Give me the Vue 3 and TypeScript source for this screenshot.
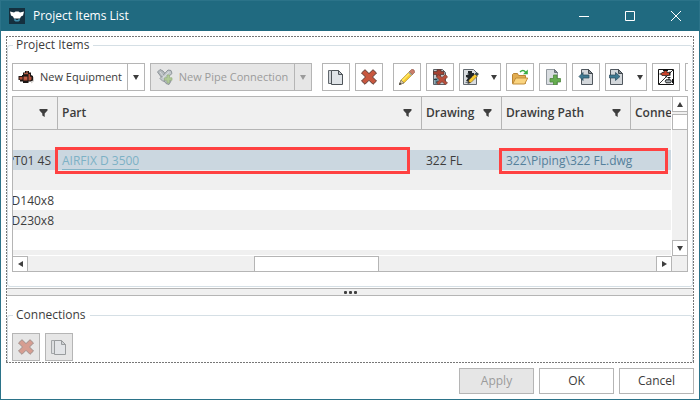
<script setup lang="ts">
interface Tool {
  icon: string
  label: string
  menu?: boolean
  spaced?: boolean
}

interface Row {
  tag: string
  part?: string
  drawing?: string
  path?: string
  selected?: boolean
}

const tools: Tool[] = [
  { icon: 'copy', label: 'Copy', spaced: true },
  { icon: 'delete', label: 'Delete' },
  { icon: 'pencil', label: 'Edit', spaced: true },
  { icon: 'remove-part', label: 'Remove part' },
  { icon: 'edit-part', label: 'Edit part', menu: true },
  { icon: 'folder', label: 'Open drawing' },
  { icon: 'add-page', label: 'Add drawing' },
  { icon: 'import', label: 'Import' },
  { icon: 'export', label: 'Export', menu: true },
  { icon: 'swap', label: 'Exchange' },
  { icon: '', label: 'More' },
]

const rows: Row[] = [
  { tag: '' },
  { tag: 'PT01 4S', part: 'AIRFIX D 3500', drawing: '322 FL', path: '322\\Piping\\322 FL.dwg', selected: true },
  { tag: '' },
  { tag: 'D140x8' },
  { tag: 'D230x8' },
  { tag: '' },
  { tag: '' },
]

const columns = ['', 'Part', 'Drawing', 'Drawing Path']
</script>

<template>
  <svg class="sprite" aria-hidden="true">
    <symbol id="copy" viewBox="0 0 16 16">
      <path d="M.500 1.500h3v13h-3z" fill="#d3d7db" stroke="#62686e" />
      <path d="M3.500 1.500h7l4 4v10h-11z" fill="#e0e4e8" stroke="#4e5459" />
      <path d="M10.500 1.500v4h4z" fill="#b9c0c6" stroke="#4e5459" />
    </symbol>
    <symbol id="delete" viewBox="0 0 16 16">
      <path d="M4 .700 8 4.600 12 .700 15.500 4 11.500 8l4 4L12 15.300l-4-4-4 4L.500 12l4-4-4-4z" fill="#c8573f" stroke="#5b3a33" stroke-linejoin="round" />
    </symbol>
    <symbol id="pencil" viewBox="0 0 16 16">
      <path d="M.500 15.500 2 11 11 2l3 3-9 9z" fill="#f6ca2d" stroke="#a98935" stroke-width=".6" />
      <path d="M3 12 12 3" stroke="#ffe96a" stroke-width="1.500" />
      <path d="m10.500 2.500 2-2q1.500-.5 2.500.6t.5 2.400l-2 2z" fill="#cb7c69" stroke="#8a5347" stroke-width=".6" />
      <path d="m9.800 3.200 3 3" stroke="#9aa3a9" stroke-width="1.500" />
      <path d="M.500 15.500 2 11l3 3z" fill="#d3c5a9" stroke="#716c64" stroke-width=".6" />
      <path d="m0 16 .8-2.500L2.600 15z" fill="#333" />
    </symbol>
    <symbol id="remove-part" viewBox="0 0 16 16">
      <path d="M1.500.500h9l3 3v12h-12z" fill="#c3c8cc" stroke="#596066" />
      <path d="M1.500 2.500H5V.800h4v1.700h3v3H8.500v2H4.500v-2h-3z" fill="#a34132" stroke="#4c302d" stroke-width=".7" />
      <path d="M2.500 9h4v6h-4z" fill="#6d8f9b" />
      <path d="M2 10.500h3M4 13h3" stroke="#273a42" />
      <path d="m6.500 5.500 3.500 3 3.500-3L15.500 8l-3 3 3 3-2 1.700-3.500-3-3.500 3L4.500 14l3-3-3-3z" fill="#b94e3b" stroke="#6b3a31" stroke-width=".7" />
    </symbol>
    <symbol id="edit-part" viewBox="0 0 16 16">
      <path d="M.500.500h10l3 3v12H.500z" fill="#dadde0" stroke="#62696f" />
      <path d="M5 2h4v2h2v3H9v3l-3 3-3-1 2-3-2-1V6h2z" fill="#22272a" />
      <path d="M2.500 13.500H5M4 5h2" stroke="#6f7b82" />
      <path d="m5.500 13.500.5-2.500 6-6 2.500 2-6.500 6.500z" fill="#f8c92f" stroke="#6e5b2a" stroke-width=".6" />
      <path d="m11.500 5 2-2L16 5l-2 2z" fill="#394a50" />
      <path d="m4.500 15 1-3 2 2z" fill="#403b32" />
    </symbol>
    <symbol id="folder" viewBox="0 0 16 16">
      <path d="M.500 14.500v-9l1-1h4l1 2h7v8z" fill="#e2ad51" stroke="#b98536" />
      <path d="m.700 15 3-6h12l-3 6z" fill="#fad47f" stroke="#c18e3e" />
      <path d="M8 3q3-3 5.500 0" fill="none" stroke="#37ad43" stroke-width="1.500" />
      <path d="M15.800.500v4.800H11z" fill="#37ad43" />
    </symbol>
    <symbol id="add-page" viewBox="0 0 16 16">
      <path d="M1.500.500h8l3 3v12h-11z" fill="#d9dde1" stroke="#92999f" />
      <path d="M9.500.500v3h3z" fill="#8a9196" stroke="#697278" />
      <path d="M8.500 6H12v3.500h3.500V13H12v3H8.500v-3H5V9.500h3.500z" fill="#66ad50" stroke="#4f873f" stroke-width=".8" />
    </symbol>
    <symbol id="import" viewBox="0 0 16 16">
      <path d="M3.500.500h7l4 4v11h-11z" fill="#d3d7db" stroke="#50575e" />
      <path d="M10.500.500v4h4z" fill="#81898f" stroke="#41484e" />
      <path d="M1 7.500 5 3.500V6h6v3H5v2.500z" fill="#3d7891" stroke="#29475a" stroke-width=".7" />
    </symbol>
    <symbol id="export" viewBox="0 0 16 16">
      <path d="M1.500.500h8l4 4v11h-12z" fill="#d3d7db" stroke="#50575e" />
      <path d="M9.500.500v4h4z" fill="#81898f" stroke="#41484e" />
      <path d="M11 7.500 6.500 3.500V6H.500v3h6v2.500z" fill="#3d7891" stroke="#29475a" stroke-width=".7" />
    </symbol>
    <symbol id="swap" viewBox="0 0 16 16">
      <path d="M.500.500h15v15H.500z" fill="#fff" stroke="#111" />
      <path d="M1 15 15 1" stroke="#333" />
      <path d="M4 3.500h2v-2h3v2h2.500v3H4q-2-1.500 0-3z" fill="#c8432b" stroke="#191919" stroke-width=".7" />
      <path d="M5 1.500h5M12 2.500v4M8 7v1.500M3 5H1.500" stroke="#111" />
      <path d="M11 8v3M9.500 8.500h3" stroke="#111" />
      <path d="M8 10.800h4.500q1.500 1.500 0 3H8q-1.500-1.500 0-3z" fill="#a9b1b6" stroke="#111" stroke-width=".9" />
      <path d="M14.500 10v4" stroke="#111" />
    </symbol>
    <symbol id="equipment" viewBox="0 0 16 16">
      <path d="M4 6h1V3.500h2V2h4v1.500h2V6l2 1v4.500l-2 1h-2.500V14H5v-1.500H2V11H.500V7H4z" fill="#1d1715" />
      <path d="M1.500 8h3v2.500h-3zM5.500 7.500h4v4h-4zM10.500 5h1.500v2.500l1.500.5v2.500l-1.500 1h-1.500zM6 12.500h3.500" fill="#b4503b" />
      <path d="M6 4.700h4M8 3h2M6 9h3" stroke="#cf6f53" />
      <path d="M15.700 8v4L13 14" fill="none" stroke="#c9c5c0" />
    </symbol>
    <symbol id="pipe" viewBox="0 0 16 16">
      <path d="M.500 3 3 .500 6 2l8 10-2 3.500-3-1z" fill="#b4babe" stroke="#8d9499" />
      <path d="m11 1 3 .5 1 3-9 8-3-3z" fill="#c2c8cb" stroke="#8d9499" />
      <path d="m3 3 8 10M12 3 6 9" stroke="#d6dadc" />
      <path d="M10 6h2.500v2.800H15v2.500h-2.500V14H10v-2.700H7.500V8.800H10z" fill="#b0cb96" stroke="#96ad85" stroke-width=".7" />
    </symbol>
    <symbol id="funnel" viewBox="0 0 9 8">
      <path d="M.500 0h8v1.500L5.700 4.500V8L3.300 6.500v-2L.500 1.500z" fill="#3f3f3f" />
    </symbol>
    <symbol id="caret" viewBox="0 0 6 5"><path d="M0 0h6L3 5z" fill="currentColor" /></symbol>
  </svg>

  <main class="dialog">
    <header class="titlebar">
      <svg class="logo" viewBox="0 0 16 16" aria-hidden="true">
        <path d="M0 0h16v16H0z" fill="#14303f" />
        <path d="m1 3.500 4 1 1.500-1h3l1.500 1 4-1-1 4-2 1-1 2H5l-1-2-2-1z" fill="#fff" />
        <path d="M5 11.200h2v.8h2v-.8h2v1L9.500 13.500h-3L5 12.200z" fill="#3e8eab" />
      </svg>
      <h1>Project Items List</h1>
      <button type="button" class="control" aria-label="Minimize"><svg viewBox="0 0 10 10"><path d="M0 5.500h10" /></svg></button>
      <button type="button" class="control" aria-label="Maximize"><svg viewBox="0 0 10 10"><path d="M.500.500h9v9h-9z" /></svg></button>
      <button type="button" class="control" aria-label="Close"><svg viewBox="0 0 10 10"><path d="m0 0 10 10M10 0 0 10" /></svg></button>
    </header>

    <div class="body">
      <div class="panes">
        <fieldset class="group items">
          <legend>Project Items</legend>
          <div class="toolbar">
            <div class="split">
              <button type="button" class="main"><svg class="icon"><use href="#equipment" /></svg>New Equipment</button>
              <button type="button" class="drop" aria-label="Equipment options"><svg class="caret"><use href="#caret" /></svg></button>
            </div>
            <div class="split off">
              <button type="button" class="main" disabled><svg class="icon"><use href="#pipe" /></svg>New Pipe Connection</button>
              <button type="button" class="drop" disabled aria-label="Connection options"><svg class="caret"><use href="#caret" /></svg></button>
            </div>
            <button
              v-for="tool in tools"
              :key="tool.label"
              type="button"
              class="tool"
              :class="{ spaced: tool.spaced, wide: tool.menu }"
              :aria-label="tool.label"
            >
              <svg v-if="tool.icon" class="icon"><use :href="'#' + tool.icon" /></svg>
              <svg v-if="tool.menu" class="caret"><use href="#caret" /></svg>
            </button>
          </div>

          <div class="grid">
            <div class="viewport">
              <table>
                <colgroup>
                  <col class="c-tag"><col><col class="c-drawing"><col class="c-path"><col class="c-rest">
                </colgroup>
                <thead>
                  <tr>
                    <th v-for="column in columns" :key="column">
                      <div class="head"><span>{{ column }}</span><svg class="funnel"><use href="#funnel" /></svg></div>
                    </th>
                    <th><div class="head">Conne</div></th>
                  </tr>
                </thead>
                <tbody>
                  <tr v-for="(row, i) in rows" :key="i" :class="{ selected: row.selected }">
                    <td><div class="tag" :class="{ inset: row.selected }">{{ row.tag }}</div></td>
                    <td>
                      <a v-if="row.part" href="#" class="part">{{ row.part }}</a>
                      <span v-if="row.selected" class="mark mark-part"></span>
                    </td>
                    <td>{{ row.drawing }}</td>
                    <td>
                      <a v-if="row.path" href="#" class="path">{{ row.path }}</a>
                      <span v-if="row.selected" class="mark mark-path"></span>
                    </td>
                    <td></td>
                  </tr>
                </tbody>
              </table>
            </div>
            <div class="vbar">
              <button type="button" class="up" aria-label="Scroll up"><svg class="arrow" viewBox="0 0 6 5"><path d="M0 5h6L3 0z" /></svg></button>
              <div class="vthumb"></div>
              <button type="button" class="down" aria-label="Scroll down"><svg class="arrow" viewBox="0 0 6 5"><path d="M0 0h6L3 5z" /></svg></button>
            </div>
            <div class="hbar">
              <button type="button" class="left" aria-label="Scroll left"><svg class="arrow side" viewBox="0 0 5 6"><path d="M5 0v6L0 3z" /></svg></button>
              <div class="track"><div class="hthumb"></div></div>
              <button type="button" class="right" aria-label="Scroll right"><svg class="arrow side" viewBox="0 0 5 6"><path d="M0 0v6l5-3z" /></svg></button>
            </div>
            <div class="corner"></div>
          </div>
        </fieldset>

        <div class="splitter"><i></i><i></i><i></i></div>

        <fieldset class="group connections">
          <legend>Connections</legend>
          <div class="toolbar">
            <button type="button" class="tool" disabled aria-label="Delete connection"><svg class="icon"><use href="#delete" /></svg></button>
            <button type="button" class="tool" disabled aria-label="Copy connection"><svg class="icon"><use href="#copy" /></svg></button>
          </div>
        </fieldset>
      </div>

      <footer>
        <button type="button" disabled>Apply</button>
        <button type="button">OK</button>
        <button type="button">Cancel</button>
      </footer>
    </div>
  </main>
</template>

<style>
body {
  margin: 0;
}
</style>

<style scoped>
* {
  box-sizing: border-box;
}
.sprite {
  display: none;
}
.dialog {
  display: flex;
  flex-direction: column;
  height: 100vh;
  border: 1px solid #2b7389;
  background: #fff;
  color: #3c3c3c;
  font: 11px/16px "Open Sans", "Noto Sans", sans-serif;
}
button {
  display: flex;
  align-items: center;
  justify-content: center;
  padding: 0;
  border: 1px solid #b5b5b5;
  background: #fff;
  color: inherit;
  font: inherit;
  white-space: nowrap;
}
button:disabled {
  background: #e6e6e6;
  color: #9b9b9b;
}
.titlebar {
  display: flex;
  flex: none;
  align-items: center;
  height: 30px;
  padding-left: 8px;
  background: #206a80;
  color: #fff;
}
.logo {
  width: 16px;
  height: 16px;
}
h1 {
  flex: 1;
  margin: 0 0 0 8px;
  font-size: 12px;
  font-weight: 400;
}
.control {
  width: 46px;
  height: 30px;
  border: 0;
  background: none;
}
.control svg {
  width: 10px;
  height: 10px;
  fill: none;
  stroke: #fff;
}
.body {
  display: flex;
  flex: 1;
  flex-direction: column;
  gap: 5px;
  min-height: 0;
  padding: 5px;
}
.panes {
  display: flex;
  flex: 1;
  flex-direction: column;
  min-height: 0;
  padding: 1px;
  background:
    repeating-linear-gradient(90deg, #777 0 2px, #fff 2px 3px) top / 100% 1px no-repeat,
    repeating-linear-gradient(90deg, #777 0 2px, #fff 2px 3px) bottom / 100% 1px no-repeat,
    repeating-linear-gradient(#777 0 2px, #fff 2px 3px) left / 1px 100% no-repeat,
    repeating-linear-gradient(#777 0 2px, #fff 2px 3px) right / 1px 100% no-repeat;
}
.group {
  display: flex;
  flex-direction: column;
  min-width: 0;
  margin: 0;
  padding: 10px 4px 14px;
  border: 1px solid #d5dfe5;
  border-radius: 3px;
}
legend {
  margin-left: 1px;
  padding: 0 4px 0 3px;
  font-size: 12px;
}
.items {
  flex: 1;
  min-height: 0;
}
.connections {
  margin-top: 11px;
  padding-bottom: 1px;
  border-bottom: 0;
  border-radius: 3px 3px 0 0;
}
.toolbar {
  display: flex;
  flex: none;
  gap: 5px;
  height: 28px;
  overflow: hidden;
}
.split {
  display: flex;
  flex: none;
  width: 133px;
}
.split.off {
  width: 162px;
}
.main {
  flex: 1;
  gap: 6px;
  border-right: 0;
}
.drop {
  width: 18px;
}
.icon {
  flex: none;
  width: 16px;
  height: 16px;
}
.caret {
  width: 6px;
  height: 5px;
}
.tool {
  flex: none;
  width: 28px;
  height: 28px;
}
.tool.wide {
  gap: 12px;
  width: 42px;
}
.tool.spaced {
  margin-left: 5px;
}
.tool:disabled .icon {
  opacity: 0.5;
}
.grid {
  display: grid;
  flex: 1;
  grid-template-columns: minmax(0, 1fr) 15px;
  grid-template-rows: minmax(0, 1fr) 15px;
  min-height: 0;
  margin-top: 5px;
  border: 1px solid #b5b5b5;
}
.viewport {
  min-width: 0;
  margin: 0 1px 1px 0;
  overflow: hidden;
}
table {
  width: 100%;
  border-spacing: 0;
  table-layout: fixed;
}
.c-tag {
  width: 45px;
}
.c-drawing {
  width: 80px;
}
.c-path {
  width: 129px;
}
.c-rest {
  width: 40px;
}
th {
  height: 33px;
  padding: 0;
  border-right: 1px solid #b5b5b5;
  border-bottom: 1px solid #b5b5b5;
  background: #f0f0f0;
  font-weight: 600;
  text-align: left;
}
th:last-child {
  border-right: 0;
}
.head {
  display: flex;
  align-items: center;
  justify-content: space-between;
  padding: 0 9px 0 4px;
  overflow: hidden;
  font-size: 12px;
}
th:last-child .head {
  padding-right: 0;
}
.funnel {
  flex: none;
  width: 9px;
  height: 8px;
}
td {
  position: relative;
  height: 20px;
  padding: 2px 4px 0;
  font-size: 12px;
  white-space: nowrap;
}
td:first-child {
  padding: 2px 0 0;
}
tbody tr:nth-child(odd) {
  background: #f0f0f0;
}
tbody tr.selected {
  background: #cbd7e0;
}
.tag {
  display: flex;
  justify-content: flex-end;
  padding-right: 4px;
  overflow: hidden;
}
.tag.inset {
  padding-right: 7px;
}
.part {
  display: inline-block;
  border-bottom: 1px solid #85b5c7;
  color: #7db1c5;
  text-decoration: none;
}
.path {
  color: #54809b;
  text-decoration: none;
}
.mark {
  position: absolute;
  z-index: 1;
  border: 3px solid #ff4141;
}
.mark-part {
  inset: -3px 12px -4px -3px;
}
.mark-path {
  inset: -2px -37px -4px -3px;
}
.vbar {
  display: flex;
  flex-direction: column;
  background: #f0f0f0;
}
.up,
.down {
  flex: none;
  width: 15px;
  height: 15px;
  border-width: 0 0 1px 1px;
}
.down {
  height: 16px;
  margin-top: auto;
  border-top-width: 1px;
}
.vthumb {
  height: 16px;
  margin-top: 2px;
  border: solid #b5b5b5;
  border-width: 1px 0 1px 1px;
  background: #fff;
}
.hbar {
  display: flex;
  background: #f0f0f0;
}
.left,
.right {
  flex: none;
  width: 15px;
  height: 15px;
  border-width: 1px 1px 0 0;
}
.right {
  width: 16px;
  border-left-width: 1px;
}
.track {
  display: grid;
  flex: 1;
  grid-template-columns: 226fr 125fr 277fr;
}
.hthumb {
  grid-column: 2;
  height: 15px;
  border: solid #b5b5b5;
  border-width: 1px 1px 0;
  background: #fff;
}
.corner {
  background: #f0f0f0;
}
.arrow {
  width: 6px;
  height: 5px;
  fill: #3f3f3f;
}
.arrow.side {
  width: 5px;
  height: 6px;
}
.splitter {
  display: flex;
  flex: none;
  gap: 2px;
  align-items: center;
  justify-content: center;
  height: 8px;
  margin-top: 1px;
  border: solid #b5b5b5;
  border-width: 1px 0;
  background: #f0f0f0;
}
.splitter i {
  width: 3px;
  height: 3px;
  border-radius: 1px;
  background: #3f3f3f;
}
footer {
  display: flex;
  flex: none;
  gap: 5px;
  justify-content: flex-end;
}
footer button {
  width: 75px;
  height: 26px;
  font-size: 12px;
}
</style>
